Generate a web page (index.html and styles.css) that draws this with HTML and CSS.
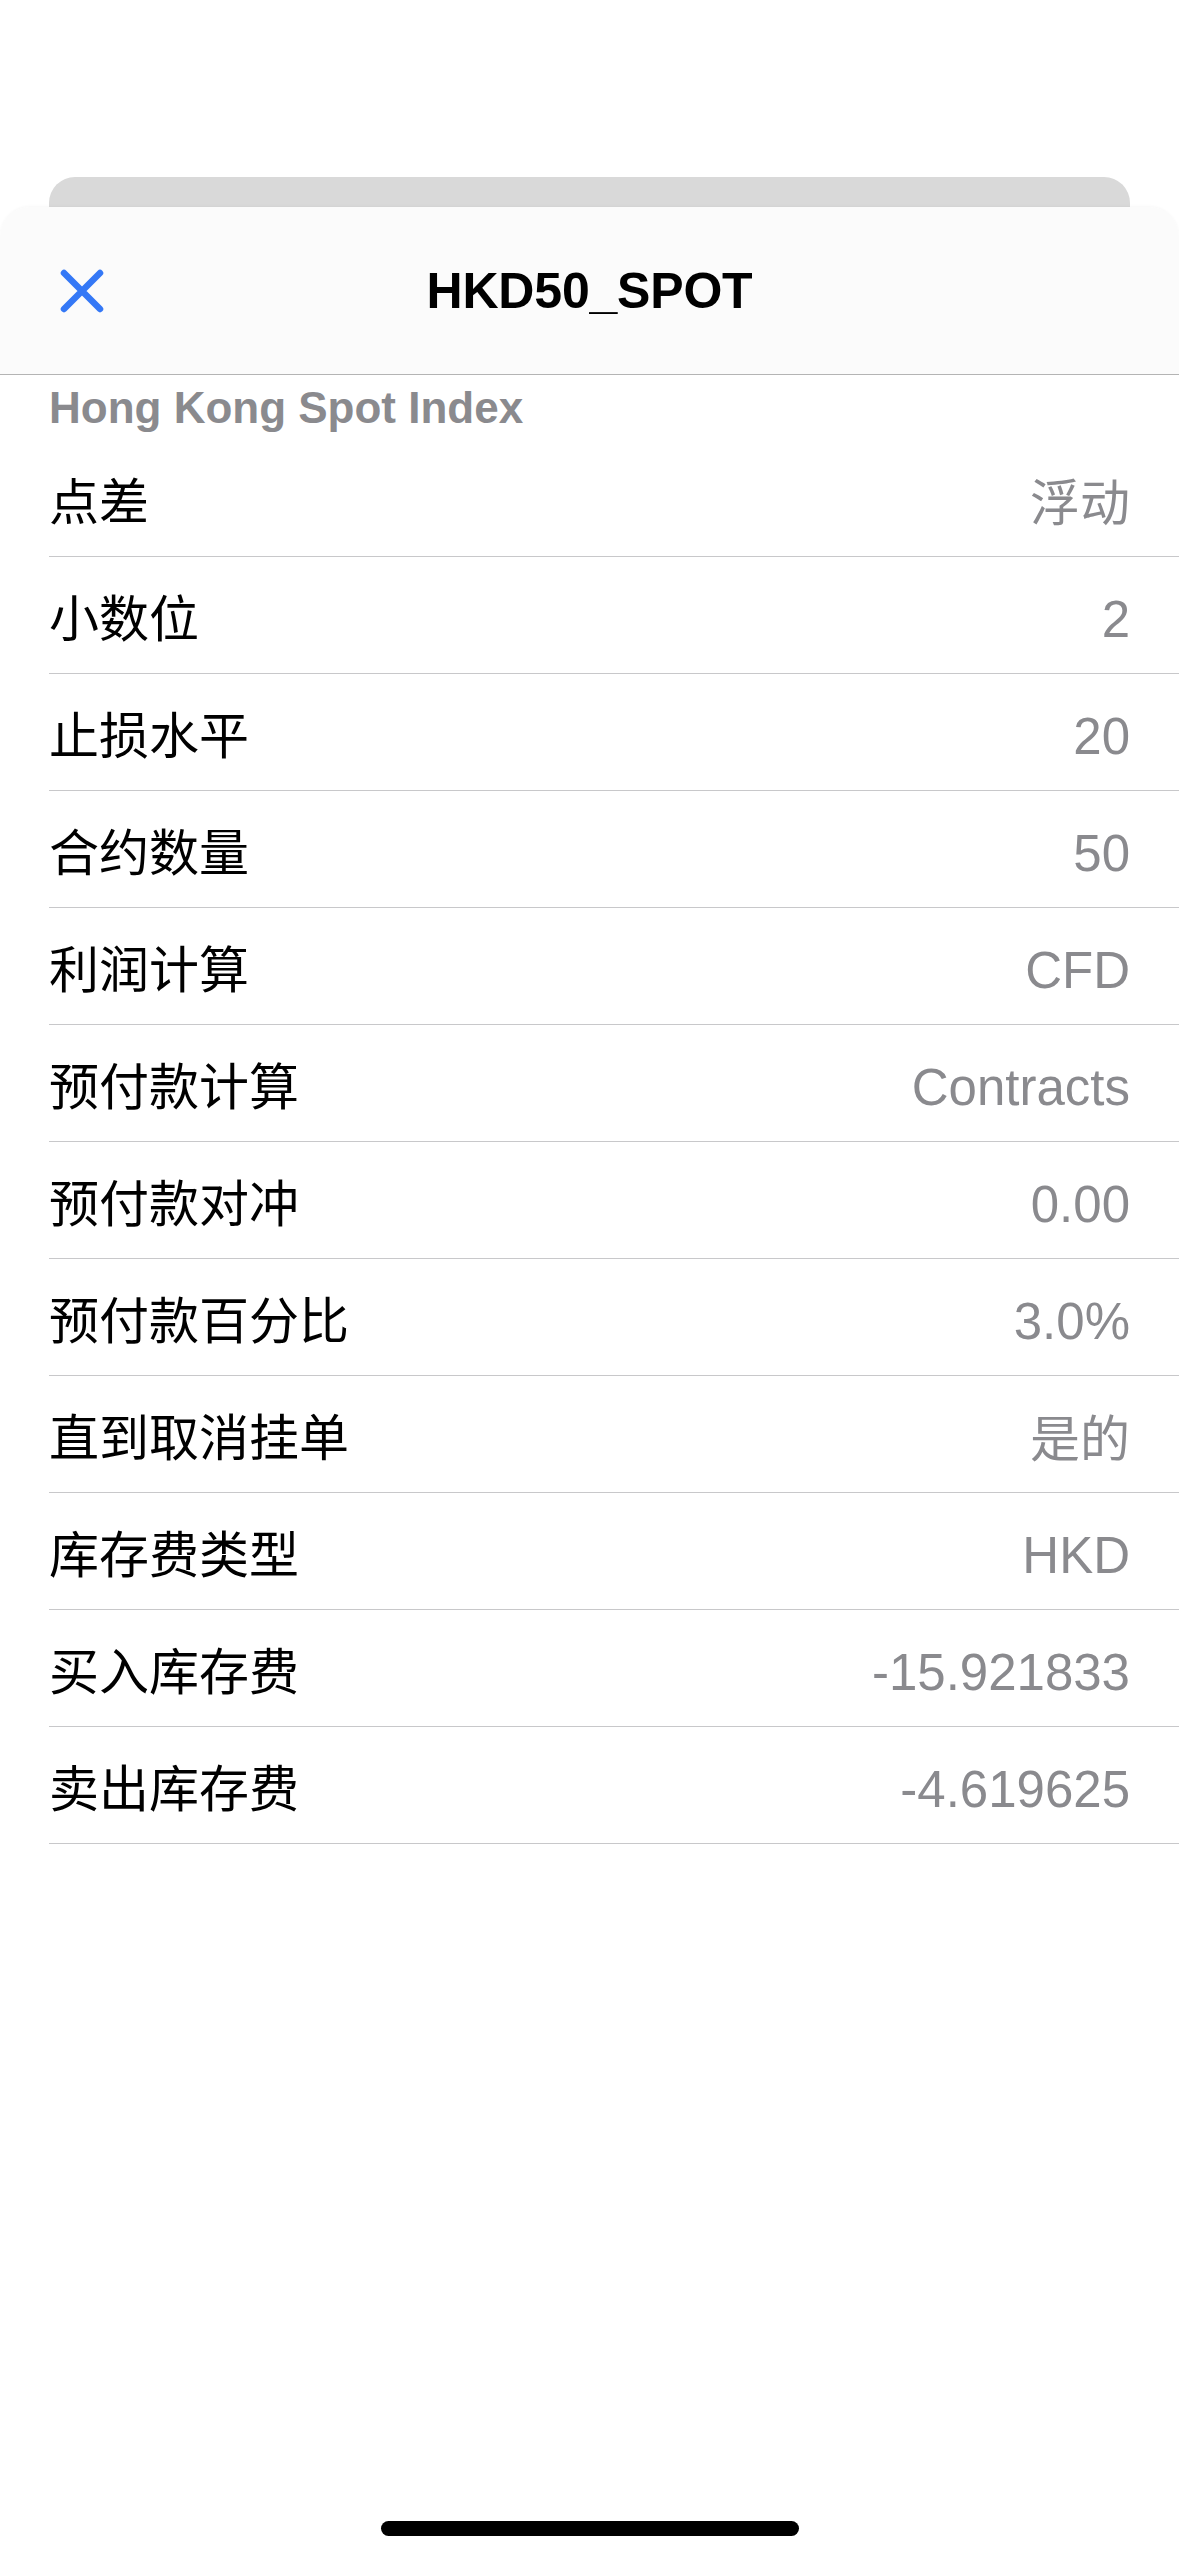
FILE: index.html
```html
<!DOCTYPE html>
<html lang="zh-CN">
<head>
<meta charset="utf-8">
<title>HKD50_SPOT</title>
<link rel="stylesheet" href="styles.css">
</head>
<body>
<div class="page">
  <div class="back-card"></div>
  <div class="sheet">
    <header class="nav">
      <div class="nav-left">
        <svg class="close" viewBox="0 0 44 44" width="44" height="44" aria-hidden="true">
          <path d="M4 4 L40 40 M40 4 L4 40" fill="none" stroke="#3478f6" stroke-width="6.5" stroke-linecap="round"/>
        </svg>
      </div>
      <div class="nav-title">HKD50_SPOT</div>
      <div class="nav-right"></div>
    </header>
    <div class="section-title">Hong Kong Spot Index</div>
    <ul class="list">
      <li class="row"><span class="label">点差</span><span class="value value-cjk">浮动</span></li>
      <li class="row"><span class="label">小数位</span><span class="value">2</span></li>
      <li class="row"><span class="label">止损水平</span><span class="value">20</span></li>
      <li class="row"><span class="label">合约数量</span><span class="value">50</span></li>
      <li class="row"><span class="label">利润计算</span><span class="value">CFD</span></li>
      <li class="row"><span class="label">预付款计算</span><span class="value">Contracts</span></li>
      <li class="row"><span class="label">预付款对冲</span><span class="value">0.00</span></li>
      <li class="row"><span class="label">预付款百分比</span><span class="value">3.0%</span></li>
      <li class="row"><span class="label">直到取消挂单</span><span class="value value-cjk">是的</span></li>
      <li class="row"><span class="label">库存费类型</span><span class="value">HKD</span></li>
      <li class="row"><span class="label">买入库存费</span><span class="value">-15.921833</span></li>
      <li class="row"><span class="label">卖出库存费</span><span class="value">-4.619625</span></li>
    </ul>
    <div class="spacer"></div>
    <div class="home-indicator"></div>
  </div>
</div>
</body>
</html>
```

FILE: styles.css
```css
html, body {
  margin: 0;
  padding: 0;
  background: #ffffff;
}

.page {
  width: 1179px;
  height: 2556px;
  overflow: hidden;
  display: flex;
  flex-direction: column;
  padding-top: 177px;
  box-sizing: border-box;
  font-family: "Liberation Sans", "Noto Sans CJK SC", sans-serif;
}

.back-card {
  margin: 0 49px;
  height: 30px;
  background: #d9d9d9;
  border-radius: 26px 26px 0 0;
  flex: none;
}

.sheet {
  flex: 1;
  display: flex;
  flex-direction: column;
  background: #ffffff;
  border-radius: 30px 30px 0 0;
  overflow: hidden;
  box-shadow: 0 -1px 3px rgba(0, 0, 0, 0.03);
}

.nav {
  height: 167px;
  flex: none;
  display: grid;
  grid-template-columns: 1fr auto 1fr;
  align-items: center;
  background: #fbfbfb;
  border-bottom: 1px solid #b4b4b4;
}

.nav-left {
  padding-left: 60px;
  display: flex;
  align-items: center;
}

.close {
  display: block;
}

.nav-title {
  font-size: 50px;
  font-weight: bold;
  color: #000000;
  letter-spacing: -0.2px;
}

.section-title {
  height: 65px;
  flex: none;
  display: flex;
  align-items: center;
  padding-left: 49px;
  font-size: 44px;
  font-weight: bold;
  color: #8a8a8e;
}

.list {
  list-style: none;
  margin: 0;
  padding: 0;
  flex: none;
}

.row {
  margin-left: 49px;
  padding-right: 49px;
  height: 116px;
  border-bottom: 1px solid #c8c8ca;
  display: flex;
  align-items: center;
  justify-content: space-between;
  font-size: 50px;
}

.label {
  color: #000000;
}

.value {
  color: #8a8a8e;
  font-size: 51px;
  padding-top: 8px;
}

.value-cjk {
  font-size: 50px;
  padding-top: 2px;
}

.spacer {
  flex: 1;
}

.home-indicator {
  flex: none;
  align-self: center;
  width: 418px;
  height: 15px;
  border-radius: 8px;
  background: #000000;
  margin-bottom: 20px;
}
```
